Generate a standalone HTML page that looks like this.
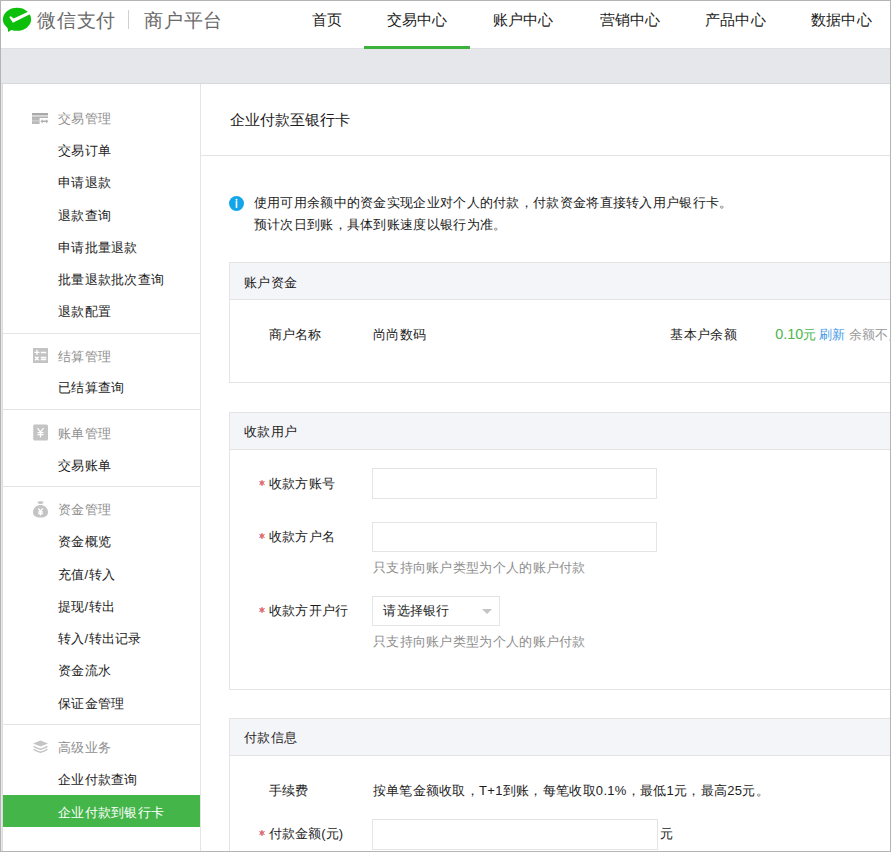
<!DOCTYPE html>
<html><head><meta charset="utf-8">
<style>
*{margin:0;padding:0;box-sizing:border-box}
html,body{width:891px;height:852px;overflow:hidden;background:#fff}
body{position:relative;font-family:"Liberation Sans",sans-serif;color:#1c1c1c;font-size:13px}
.a{position:absolute}
.t{position:absolute;white-space:nowrap;line-height:20px;font-size:13px;letter-spacing:0.3px}
.frame{position:absolute;left:0;top:0;width:891px;height:852px;border:1px solid #b4b4b4;z-index:50}
.hl{position:absolute;height:1px;background:#e4e4e4}
.vl{position:absolute;width:1px;background:#e4e4e4}
.inp{position:absolute;border:1px solid #e4e4e4;background:#fff}
</style></head><body>
<div class="frame"></div>
<svg class="a" style="left:0;top:0" width="34" height="34" viewBox="0 0 34 34">
<ellipse cx="17" cy="19.3" rx="14.1" ry="11.5" fill="#0bbf0b"/>
<path d="M7.6 27.6L8.1 32L12.2 29.6Z" fill="#0bbf0b"/>
<path d="M9.2 17.0L10.9 16.2L13.7 18.4L28.6 11.6L30.4 13.9L12.9 22.7Z" fill="#fff"/>
</svg>
<div class="t" style="left:37.0px;top:5.6px;font-size:19px;line-height:30px;color:#6a6a6a;letter-spacing:0.8px">微信支付</div>
<div class="a" style="left:128px;top:10px;width:1px;height:19px;background:#d0d0d0"></div>
<div class="t" style="left:143.8px;top:5.6px;font-size:19px;line-height:30px;color:#6a6a6a;letter-spacing:0.9px">商户平台</div>
<div class="t" style="left:311.5px;top:9.7px;font-size:15px;line-height:20px;color:#222;letter-spacing:0.2px">首页</div>
<div class="t" style="left:386.8px;top:9.7px;font-size:15px;line-height:20px;color:#222;letter-spacing:0.2px">交易中心</div>
<div class="t" style="left:492.8px;top:9.7px;font-size:15px;line-height:20px;color:#222;letter-spacing:0.2px">账户中心</div>
<div class="t" style="left:599.7px;top:9.7px;font-size:15px;line-height:20px;color:#222;letter-spacing:0.2px">营销中心</div>
<div class="t" style="left:705.0px;top:9.7px;font-size:15px;line-height:20px;color:#222;letter-spacing:0.2px">产品中心</div>
<div class="t" style="left:811.0px;top:9.7px;font-size:15px;line-height:20px;color:#222;letter-spacing:0.2px">数据中心</div>
<div class="a" style="left:0;top:48px;width:891px;height:36px;background:#e6e7ea;border-top:1px solid #dfe0e3;border-bottom:1px solid #d8d9dc"></div>
<div class="a" style="left:364px;top:46px;width:106px;height:3px;background:#3cb13c"></div>
<div class="vl" style="left:200px;top:84px;height:768px"></div>
<div class="a" style="left:1px;top:84px;width:1px;height:768px;background:#e8e8e8"></div><div class="a" style="left:2px;top:84px;width:1px;height:768px;background:#dcdcdc"></div>
<div class="t" style="left:58.0px;top:109.0px;color:#8f8f8f">交易管理</div>
<svg class="a" style="left:32px;top:113.0px" width="17" height="11" viewBox="0 0 17 11"><rect x="0" y="0" width="16" height="2.2" fill="#a9a9a9"/><rect x="0" y="2.2" width="16" height="1.6" fill="#d2d2d2"/><rect x="0" y="3.8" width="16" height="1.2" fill="#b3b3b3"/><rect x="0" y="5" width="7.6" height="6" fill="#b9b9b9"/><rect x="0" y="7.4" width="7.6" height="0.9" fill="#d6d6d6"/><path d="M8.4 8.3L10.6 6.2V7.6H14V6.2L16.4 8.3L14 10.5V9.1H10.6V10.5Z" fill="#b0b0b0"/></svg>
<div class="t" style="left:58.0px;top:141.3px">交易订单</div>
<div class="t" style="left:58.0px;top:173.4px">申请退款</div>
<div class="t" style="left:58.0px;top:205.6px">退款查询</div>
<div class="t" style="left:58.0px;top:237.8px">申请批量退款</div>
<div class="t" style="left:58.0px;top:269.8px">批量退款批次查询</div>
<div class="t" style="left:58.0px;top:301.8px">退款配置</div>
<div class="hl" style="left:2px;top:333px;width:198px"></div>
<div class="t" style="left:58.0px;top:346.9px;color:#8f8f8f">结算管理</div>
<svg class="a" style="left:33px;top:348.0px" width="15" height="15" viewBox="0 0 15 15"><rect width="15" height="15" fill="#c3c3c3"/><path d="M1.5 4.3H6.5M4 1.8V6.8M7.8 4.5H13.3M7.8 9.5H13.3M7.8 11.5H13.3M2 8.8L5.6 12.3M5.6 8.8L2 12.3" stroke="#fff" stroke-width="1.3"/></svg>
<div class="t" style="left:58.0px;top:378.4px">已结算查询</div>
<div class="hl" style="left:2px;top:409px;width:198px"></div>
<div class="t" style="left:58.0px;top:423.6px;color:#8f8f8f">账单管理</div>
<svg class="a" style="left:32px;top:423.5px" width="16" height="17" viewBox="0 0 16 17"><path d="M2 0.5H14.5Q16 0.5 16 2V15Q16 16.5 14.5 16.5H2.5Q1.5 16.5 1.5 15.5Q0.5 14.5 1.5 13.5Q0.5 12.5 1.5 11.5Q0.5 10.5 1.5 9.5Q0.5 8.5 1.5 7.5Q0.5 6.5 1.5 5.5Q0.5 4.5 1.5 3.5Q0.5 2.5 1.5 1.5Q1.5 0.5 2 0.5Z" fill="#c4c4c4"/><path d="M5.5 4L8.5 8L11.5 4M5.5 8.5H11.5M5.5 10.5H11.5M8.5 8V13.5" stroke="#fff" stroke-width="1.25" fill="none"/></svg>
<div class="t" style="left:58.0px;top:456.1px">交易账单</div>
<div class="hl" style="left:2px;top:486px;width:198px"></div>
<div class="t" style="left:58.0px;top:499.9px;color:#8f8f8f">资金管理</div>
<svg class="a" style="left:33px;top:500.8px" width="15" height="17" viewBox="0 0 15 17"><ellipse cx="7.5" cy="1.6" rx="3" ry="1.3" fill="#c2c2c2"/><path d="M7.5 4C11.8 4 15 7.5 15 11.2C15 14.6 12 16.6 7.5 16.6C3 16.6 0 14.6 0 11.2C0 7.5 3.2 4 7.5 4Z" fill="#c4c4c4"/><path d="M5.3 7.3L7.5 10.3L9.7 7.3M5.2 11H9.8M5.2 12.6H9.8M7.5 10.3V14.5" stroke="#fff" stroke-width="1.3" fill="none"/></svg>
<div class="t" style="left:58.0px;top:532.2px">资金概览</div>
<div class="t" style="left:58.0px;top:564.6px">充值/转入</div>
<div class="t" style="left:58.0px;top:596.6px">提现/转出</div>
<div class="t" style="left:58.0px;top:629.1px">转入/转出记录</div>
<div class="t" style="left:58.0px;top:661.1px">资金流水</div>
<div class="t" style="left:58.0px;top:693.6px">保证金管理</div>
<div class="hl" style="left:2px;top:724px;width:198px"></div>
<div class="t" style="left:58.0px;top:737.9px;color:#8f8f8f">高级业务</div>
<svg class="a" style="left:33px;top:739.5px" width="15" height="13" viewBox="0 0 15 13"><path d="M7.5 0.4L15 3.5L7.5 6.6L0 3.5Z" fill="#c4c4c4"/><path d="M0.6 6.4Q4 8.6 7.5 9.2Q11 8.6 14.4 6.4M0.6 9.4Q4 11.6 7.5 12.2Q11 11.6 14.4 9.4" stroke="#c4c4c4" stroke-width="1.5" fill="none"/></svg>
<div class="t" style="left:58.0px;top:769.8px">企业付款查询</div>
<div class="a" style="left:3px;top:795px;width:197px;height:32px;background:#44b549"></div>
<div class="t" style="left:58.0px;top:802.6px;color:#fff">企业付款到银行卡</div>
<div class="t" style="left:229.5px;top:110.0px;font-size:15px;line-height:20px;letter-spacing:0.1px">企业付款至银行卡</div>
<div class="hl" style="left:201px;top:155px;width:690px"></div>
<svg class="a" style="left:229px;top:195.8px" width="15" height="15" viewBox="0 0 15 15"><circle cx="7.5" cy="7.5" r="7.5" fill="#12a5ea"/><circle cx="7.5" cy="3.7" r="1" fill="#fff"/><rect x="6.7" y="5" width="1.6" height="6.9" fill="#fff"/></svg>
<div class="t" style="left:253.8px;top:193.2px">使用可用余额中的资金实现企业对个人的付款，付款资金将直接转入用户银行卡。</div>
<div class="t" style="left:253.8px;top:215.4px">预计次日到账，具体到账速度以银行为准。</div>
<div class="a" style="left:229px;top:262px;width:700px;height:121px;border:1px solid #e4e4e4;background:#fff"></div>
<div class="a" style="left:230px;top:263px;width:700px;height:37px;background:#f4f5f9;border-bottom:1px solid #e4e4e4"></div>
<div class="t" style="left:244.0px;top:272.6px">账户资金</div>
<div class="t" style="left:268.5px;top:324.9px">商户名称</div>
<div class="t" style="left:373.2px;top:324.9px">尚尚数码</div>
<div class="t" style="left:670.4px;top:324.9px">基本户余额</div>
<div class="t" style="left:775.2px;top:324.0px;color:#4cb64c;letter-spacing:0px"><span style="font-size:14.4px;letter-spacing:0">0.10</span>元</div>
<div class="t" style="left:818.7px;top:324.9px;color:#459ae9">刷新</div>
<div class="t" style="left:848.7px;top:324.9px;color:#999">余额不足</div>
<div class="a" style="left:229px;top:412px;width:700px;height:278px;border:1px solid #e4e4e4;background:#fff"></div>
<div class="a" style="left:230px;top:413px;width:700px;height:37px;background:#f4f5f9;border-bottom:1px solid #e4e4e4"></div>
<div class="t" style="left:244.0px;top:422.3px">收款用户</div>
<svg class="a" style="left:257.8px;top:478.8px" width="8" height="8" viewBox="0 0 8 8"><circle cx="4" cy="4" r="2" fill="#e87a84"/><path d="M4 1V7M1.3 2.4L6.7 5.6M6.7 2.4L1.3 5.6" stroke="#dc6b75" stroke-width="1.1"/></svg>
<div class="t" style="left:268.8px;top:474.1px">收款方账号</div>
<div class="inp" style="left:372px;top:468px;width:285px;height:31px"></div>
<svg class="a" style="left:257.8px;top:531.9px" width="8" height="8" viewBox="0 0 8 8"><circle cx="4" cy="4" r="2" fill="#e87a84"/><path d="M4 1V7M1.3 2.4L6.7 5.6M6.7 2.4L1.3 5.6" stroke="#dc6b75" stroke-width="1.1"/></svg>
<div class="t" style="left:268.8px;top:527.2px">收款方户名</div>
<div class="inp" style="left:372px;top:522px;width:285px;height:30px"></div>
<div class="t" style="left:373.0px;top:558.3px;color:#8e8e8e">只支持向账户类型为个人的账户付款</div>
<svg class="a" style="left:257.8px;top:606.0px" width="8" height="8" viewBox="0 0 8 8"><circle cx="4" cy="4" r="2" fill="#e87a84"/><path d="M4 1V7M1.3 2.4L6.7 5.6M6.7 2.4L1.3 5.6" stroke="#dc6b75" stroke-width="1.1"/></svg>
<div class="t" style="left:268.8px;top:601.3px">收款方开户行</div>
<div class="inp" style="left:372px;top:596px;width:128px;height:30px"></div>
<div class="t" style="left:383.3px;top:601.1px">请选择银行</div>
<div class="a" style="left:482px;top:609px;width:0;height:0;border-left:5px solid transparent;border-right:5px solid transparent;border-top:5px solid #c4c4c4"></div>
<div class="t" style="left:373.0px;top:632.3px;color:#8e8e8e">只支持向账户类型为个人的账户付款</div>
<div class="a" style="left:229px;top:718px;width:700px;height:183px;border:1px solid #e4e4e4;background:#fff"></div>
<div class="a" style="left:230px;top:719px;width:700px;height:37px;background:#f4f5f9;border-bottom:1px solid #e4e4e4"></div>
<div class="t" style="left:244.0px;top:728.4px">付款信息</div>
<div class="t" style="left:268.8px;top:780.6px">手续费</div>
<div class="t" style="left:372.7px;top:780.6px">按单笔金额收取，T+1到账，每笔收取0.1%，最低1元，最高25元。</div>
<svg class="a" style="left:257.8px;top:829.1px" width="8" height="8" viewBox="0 0 8 8"><circle cx="4" cy="4" r="2" fill="#e87a84"/><path d="M4 1V7M1.3 2.4L6.7 5.6M6.7 2.4L1.3 5.6" stroke="#dc6b75" stroke-width="1.1"/></svg>
<div class="t" style="left:268.8px;top:824.4px;letter-spacing:0.1px">付款金额(元)</div>
<div class="inp" style="left:372px;top:819px;width:286px;height:31px"></div>
<div class="t" style="left:660.4px;top:824.2px">元</div>
</body></html>
